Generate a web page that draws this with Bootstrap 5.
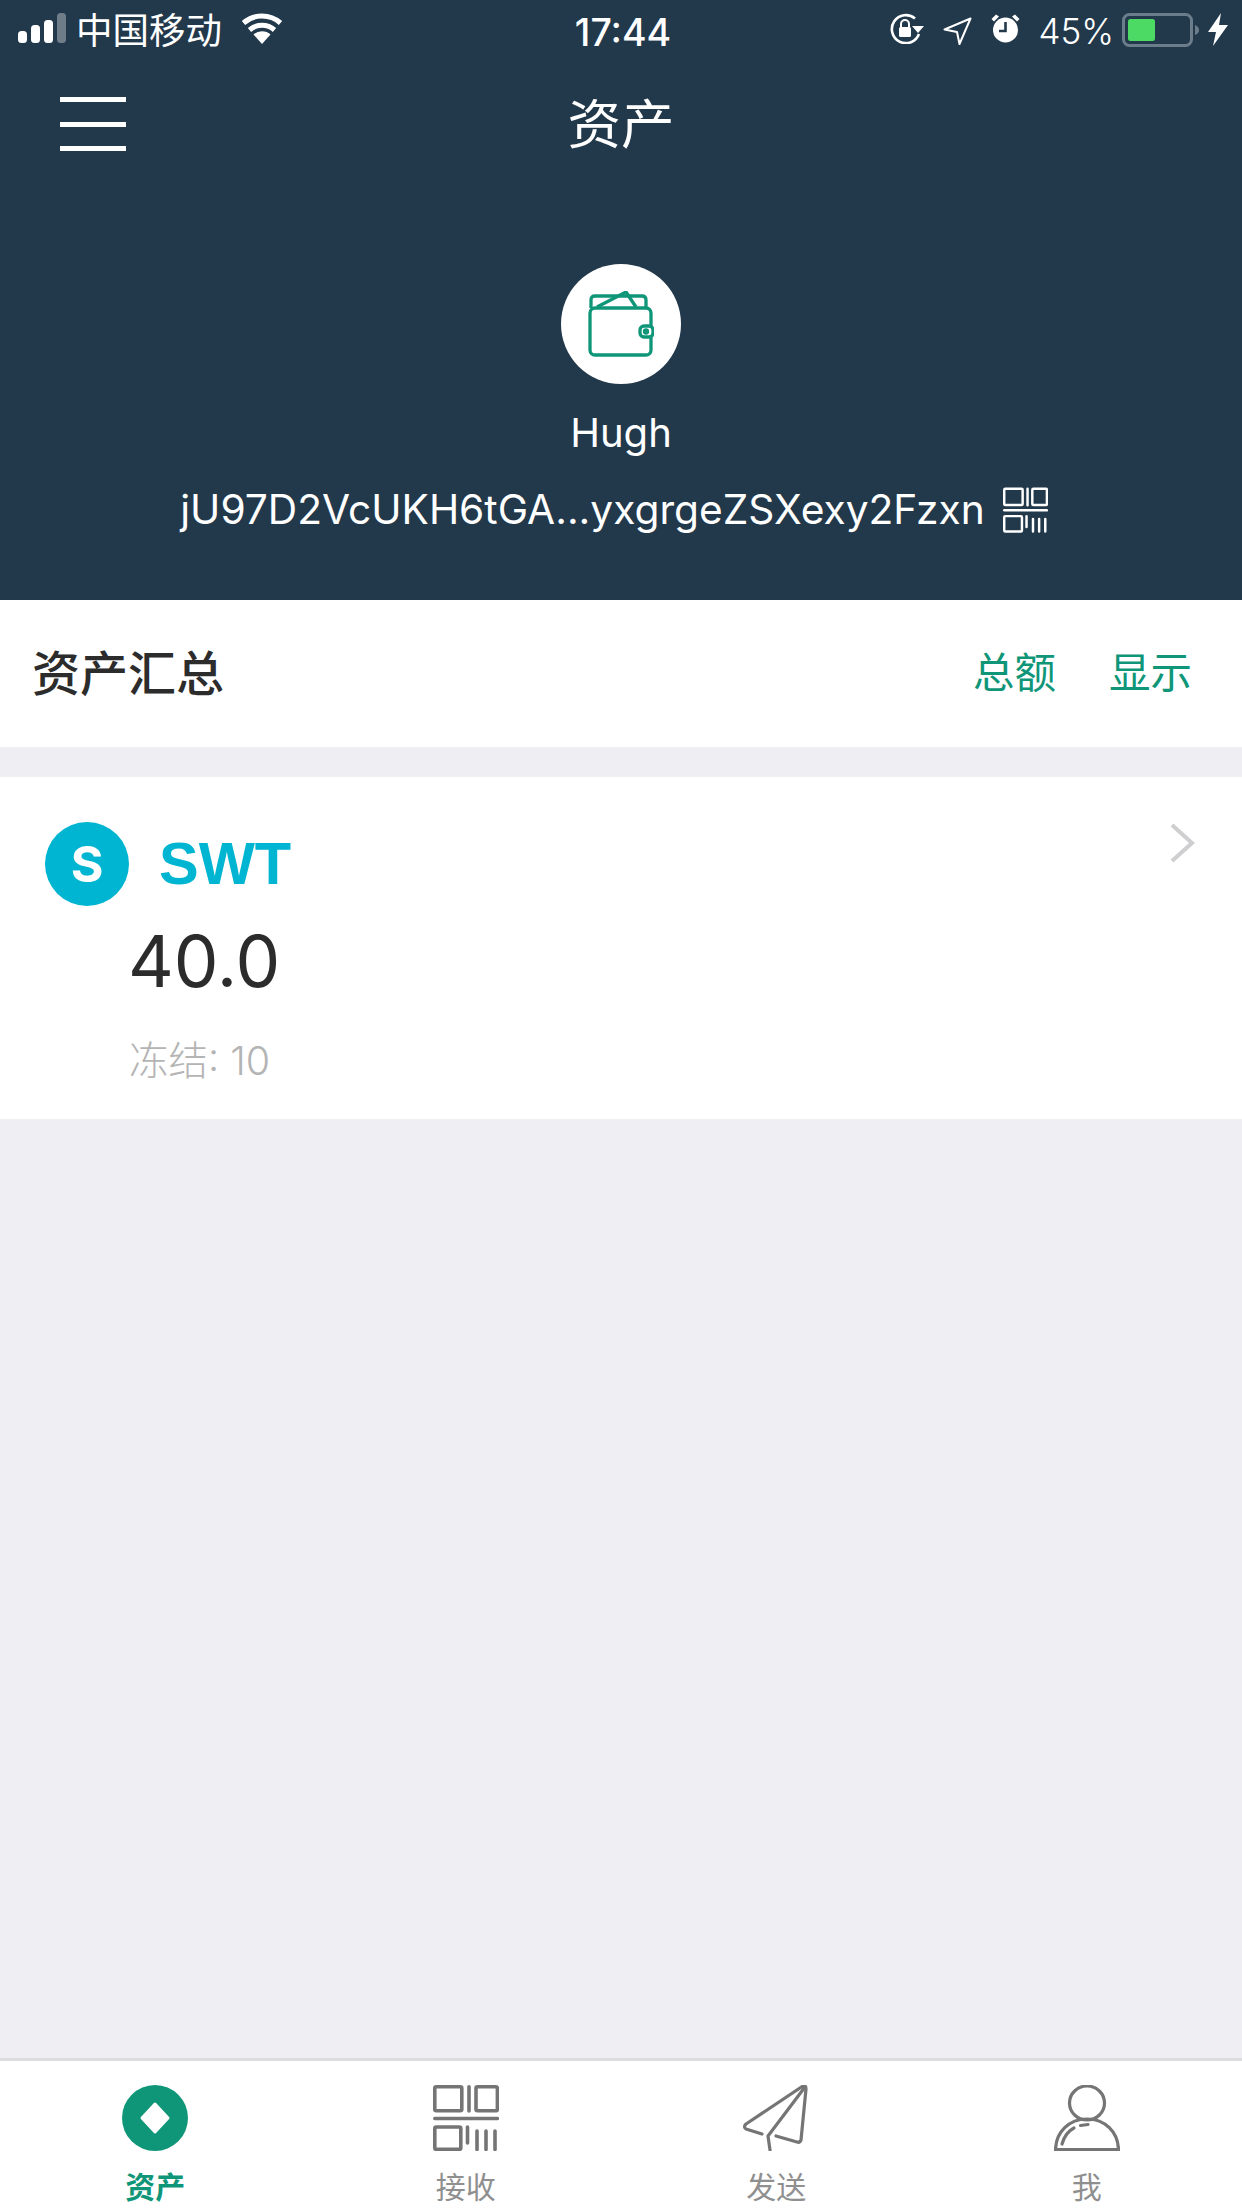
<!DOCTYPE html>
<html lang="zh-CN">
<head>
  <meta charset="UTF-8">
  <title>资产</title>
  <link href="https://cdn.jsdelivr.net/npm/bootstrap@5.3.0/dist/css/bootstrap.min.css" rel="stylesheet">
  <style>
    html, body {
      height: 2208px;
      overflow: hidden;
    }
    body {
      font-family: Inter, "Noto Sans CJK SC", sans-serif;
      background-color: #eeeef3;
      color: #2c2c2c;
    }
    svg { display: block; flex: none; }
    .app-shell { width: 1242px; height: 2208px; }
    .hero { height: 600px; background-color: #22384b; color: #fff; }

    .status-bar { height: 60px; padding: 13px 14px 0 18px; font-size: 36px; line-height: 36px; }
    .status-side { flex: 1 1 0; min-width: 0; }
    .carrier { margin-left: 10px; margin-right: 19px; font-weight: 400; font-size: 36.500px; }
    .clock { font-size: 37.500px; font-weight: 500; padding-top: 2px; }
    .pct { font-weight: 300; font-size: 35px; margin: 0 8px 0 18px; }
    .status-gap { margin-right: 19px; }

    .top-nav { height: 128px; padding-top: 2px; }
    .nav-side { flex: 1 1 0; }
    .nav-title { font-size: 53.500px; font-weight: 400; line-height: 60px; }
    .burger { width: 66px; margin-left: 60px; margin-top: -2px; }
    .burger span { display: block; height: 5px; background-color: #fff; margin-bottom: 19.5px; }
    .burger span:last-child { margin-bottom: 0; }

    .avatar-ring { width: 120px; height: 120px; background-color: #fff; margin-top: 76px; }
    .wallet-name { font-size: 40px; font-weight: 400; line-height: 50px; margin-top: 24px; }
    .wallet-addr { font-size: 40.700px; font-weight: 400; line-height: 52px; margin: 26px 14px 0 0; gap: 18px; }

    .summary-bar { height: 147px; padding: 0 50px 0 32px; }
    .summary-title { font-size: 48px; font-weight: 500; }
    .summary-link { font-size: 41.500px; font-weight: 400; color: #0f9678; margin-left: 53px; }

    .asset-row { height: 342px; margin-top: 30px; padding: 45px 47px 0 45px; }
    .coin-dot { width: 84px; height: 84px; background-color: #00b5d1; color: #fff; font-size: 50px; font-weight: 700; }
    .coin-name { font-size: 59.500px; font-weight: 700; color: #00b5d1; margin-left: 30px; line-height: 84px; font-family: "Liberation Sans", sans-serif; }
    .asset-chevron { margin-top: 1px; }
    .asset-amount { font-size: 71px; font-weight: 400; line-height: 80px; margin: 15px 0 0 83px; }
    .asset-frozen { font-size: 39.500px; font-weight: 300; color: #b4b4b4; line-height: 44px; margin: 38px 0 0 84px; }

    .tab-bar { height: 150px; background-color: #fff; border-top: 3px solid #dcdcdf; padding-top: 24px; }
    .tab-cell { color: #8f8f8f; font-size: 30px; line-height: 36px; }
    .tab-cell svg { margin-bottom: 18px; }
    .tab-qr { color: #757575; }
    .tab-active { color: #0f9678; font-weight: 700; }
  </style>
</head>
<body>
  <svg width="0" height="0" class="position-absolute">
    <symbol id="qr" viewBox="0 0 66 66">
      <g fill="none" stroke="currentColor" stroke-width="3.6" stroke-linecap="round" stroke-linejoin="round">
        <rect x="1.8" y="1.8" width="27" height="24" rx="1.5"/>
        <path d="M36 1.8V26"/>
        <rect x="43" y="1.8" width="21.4" height="24" rx="1.5"/>
        <path d="M1.8 33.5H64.4"/>
        <rect x="1.8" y="42" width="26" height="22.400" rx="1.5"/>
        <path d="M34.500 42V58M44 46V64.400M53 46V64.400M62 46V64.400"/>
      </g>
    </symbol>
  </svg>

  <div class="app-shell d-flex flex-column">
    <header class="hero">
      <div class="status-bar d-flex">
        <div class="status-side d-flex align-items-start">
          <svg width="48" height="30" viewBox="0 0 48 30">
            <rect x="0" y="18" width="9" height="12" rx="3.500" fill="#fff"/>
            <rect x="13" y="12" width="9" height="18" rx="3.500" fill="#fff"/>
            <rect x="26" y="7" width="9" height="23" rx="3.500" fill="#fff"/>
            <rect x="39" y="0" width="9" height="30" rx="3.500" fill="#fff" fill-opacity=".35"/>
          </svg>
          <span class="carrier">中国移动</span>
          <svg width="42" height="31" viewBox="0 0 42 31">
            <path d="M21 31 12.500 21.500A13 13 0 0 1 29.500 21.500Z" fill="#fff"/>
            <path d="M8.500 17A19 19 0 0 1 33.500 17" fill="none" stroke="#fff" stroke-width="5"/>
            <path d="M2.500 10A28 28 0 0 1 39.500 10" fill="none" stroke="#fff" stroke-width="5"/>
          </svg>
        </div>
        <div class="clock">17:44</div>
        <div class="status-side d-flex justify-content-end align-items-start">
          <svg width="34" height="31" viewBox="0 0 34 31" class="status-gap">
            <path d="M29 21A14 14 0 1 1 25 5.500" fill="none" stroke="#fff" stroke-width="2.600"/>
            <path d="M22 13H34L28 20Z" fill="#fff"/>
            <rect x="9" y="14" width="12" height="10" rx="1.500" fill="#fff"/>
            <path d="M11 14V11A4 4 0 0 1 19 11V14" fill="none" stroke="#fff" stroke-width="2"/>
          </svg>
          <svg width="29" height="29" viewBox="0 0 29 29" class="status-gap mt-1">
            <path d="M1.500 12.500 27.500 1.500 16.500 27 14 15Z" fill="none" stroke="#fff" stroke-width="2" stroke-linejoin="round"/>
          </svg>
          <svg width="29" height="30" viewBox="0 0 29 30">
            <circle cx="14.500" cy="17" r="12.500" fill="#fff"/>
            <path d="M14.500 9V18H8" fill="none" stroke="#22384b" stroke-width="2.600"/>
            <path d="M0.500 6 5 1.500 8 3.500 3 8.500ZM28.500 6 24 1.500 21 3.500 26 8.500Z" fill="#fff"/>
          </svg>
          <span class="pct">45%</span>
          <svg width="78" height="34" viewBox="0 0 78 34">
            <rect x="1.500" y="1.500" width="68" height="31" rx="6" fill="none" stroke="#6b7c8a" stroke-width="3"/>
            <rect x="6" y="6" width="27" height="22" rx="2.500" fill="#4cd964"/>
            <path d="M73 12C76 13 77 15 77 17S76 21 73 22Z" fill="#6b7c8a"/>
          </svg>
          <svg width="20" height="33" viewBox="0 0 20 33" class="ms-2">
            <path d="M13 0 0 19H8L5 33 20 12H11Z" fill="#fff"/>
          </svg>
        </div>
      </div>

      <nav class="top-nav d-flex align-items-center">
        <div class="nav-side">
          <div class="burger"><span></span><span></span><span></span></div>
        </div>
        <div class="nav-title">资产</div>
        <div class="nav-side"></div>
      </nav>

      <div class="d-flex flex-column align-items-center">
        <div class="avatar-ring rounded-circle d-flex align-items-center justify-content-center">
          <svg width="66" height="66" viewBox="0 0 66 66">
            <g fill="none" stroke="#0f9678" stroke-width="3.300" stroke-linejoin="round">
              <path d="M3 17V9Q3 5 7 5H54Q58 5 58 9V17"/>
              <path d="M9 16 38 1 48 16"/>
              <rect x="2" y="17" width="61" height="47" rx="5" fill="#fff"/>
              <rect x="52" y="35" width="13" height="11" rx="4" fill="#fff"/>
              <circle cx="58" cy="40.500" r="1.500"/>
            </g>
          </svg>
        </div>
        <div class="wallet-name">Hugh</div>
        <div class="wallet-addr d-flex align-items-center">
          <span>jU97D2VcUKH6tGA...yxgrgeZSXexy2Fzxn</span>
          <svg width="45" height="46"><use href="#qr"/></svg>
        </div>
      </div>
    </header>

    <section class="summary-bar bg-white d-flex align-items-center">
      <div class="summary-title me-auto">资产汇总</div>
      <div class="summary-link">总额</div>
      <div class="summary-link">显示</div>
    </section>

    <section class="asset-row bg-white">
      <div class="d-flex align-items-start">
        <div class="coin-dot rounded-circle d-flex align-items-center justify-content-center">S</div>
        <div class="coin-name me-auto">SWT</div>
        <svg class="asset-chevron" width="26" height="40" viewBox="0 0 26 40">
          <path d="M3 2 23 20 3 38" fill="none" stroke="#cfcfd2" stroke-width="4"/>
        </svg>
      </div>
      <div class="asset-amount">40.0</div>
      <div class="asset-frozen">冻结: 10</div>
    </section>

    <div class="flex-grow-1"></div>

    <footer class="tab-bar row g-0">
      <div class="col-3 tab-cell tab-active d-flex flex-column align-items-center">
        <svg width="66" height="66" viewBox="0 0 66 66">
          <circle cx="33" cy="33" r="33" fill="#0f9678"/>
          <path d="M33 19 46 33 33 47 20 33Z" fill="#fff" stroke="#fff" stroke-width="3" stroke-linejoin="round"/>
        </svg>
        <span>资产</span>
      </div>
      <div class="col-3 tab-cell d-flex flex-column align-items-center">
        <svg width="66" height="66" class="tab-qr"><use href="#qr"/></svg>
        <span>接收</span>
      </div>
      <div class="col-3 tab-cell d-flex flex-column align-items-center">
        <svg width="66" height="66" viewBox="0 0 66 66">
          <g fill="none" stroke="#757575" stroke-width="3.200" stroke-linecap="round" stroke-linejoin="round">
            <path d="M19 49 3 44Q0 42 3 39L60 1Q63 0 63 4L58 55Q57 58 54 57L33 51"/>
            <path d="M62 2 25 51 27 65"/>
          </g>
        </svg>
        <span>发送</span>
      </div>
      <div class="col-3 tab-cell d-flex flex-column align-items-center">
        <svg width="66" height="66" viewBox="0 0 66 66">
          <g fill="none" stroke="#757575" stroke-width="3.200" stroke-linecap="round">
            <ellipse cx="33" cy="18" rx="17.500" ry="17"/>
            <path d="M1.500 64.500C2 47 15 34 33 34S64 47 64.500 64.500Z"/>
            <path d="M8 59C10 52 14 46 20 43M26.500 40.500 34 39.500"/>
          </g>
        </svg>
        <span>我</span>
      </div>
    </footer>
  </div>
</body>
</html>
